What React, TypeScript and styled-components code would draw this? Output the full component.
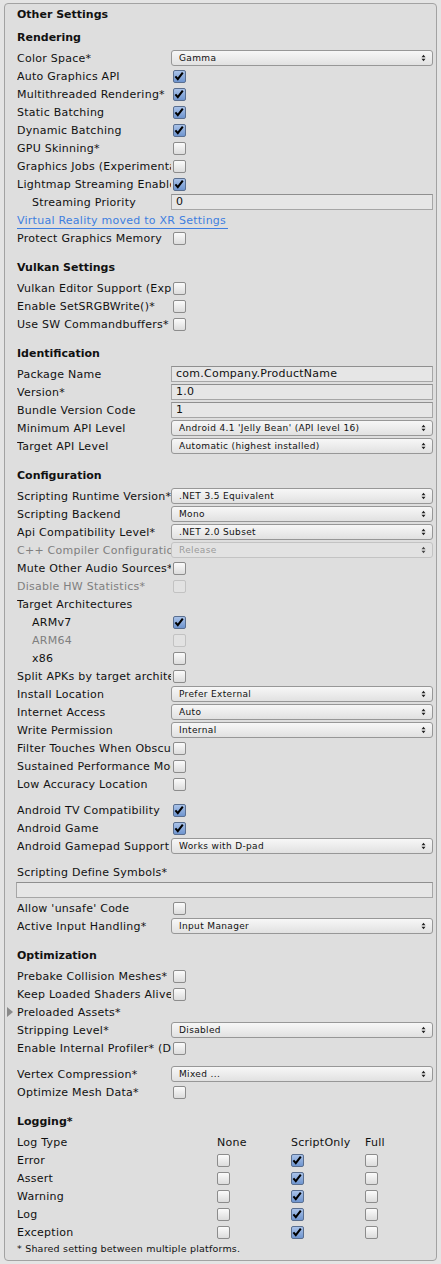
import { Fragment } from 'react';
import styled, { createGlobalStyle } from 'styled-components';

const GlobalStyle = createGlobalStyle`
  html, body {
    margin: 0;
    padding: 0;
    background: #e4e4e4;
  }
  body {
    font-family: 'DejaVu Sans', Verdana, sans-serif;
    font-size: 11px;
    color: #111;
  }
`;

type Item =
  | { kind: 'header'; text: string; top?: number }
  | { kind: 'toggle'; label: string; checked?: boolean; disabled?: boolean; indent?: boolean }
  | { kind: 'popup'; label: string; value: string; disabled?: boolean }
  | { kind: 'field'; label: string; value: string; indent?: boolean }
  | { kind: 'label'; label: string; foldout?: boolean }
  | { kind: 'link'; text: string }
  | { kind: 'wide'; value: string }
  | { kind: 'space'; h: number };

const items: Item[] = [
  { kind: 'header', text: 'Rendering', top: 5 },
  { kind: 'popup', label: 'Color Space*', value: 'Gamma' },
  { kind: 'toggle', label: 'Auto Graphics API', checked: true },
  { kind: 'toggle', label: 'Multithreaded Rendering*', checked: true },
  { kind: 'toggle', label: 'Static Batching', checked: true },
  { kind: 'toggle', label: 'Dynamic Batching', checked: true },
  { kind: 'toggle', label: 'GPU Skinning*' },
  { kind: 'toggle', label: 'Graphics Jobs (Experimental)*' },
  { kind: 'toggle', label: 'Lightmap Streaming Enabled', checked: true },
  { kind: 'field', label: 'Streaming Priority', value: '0', indent: true },
  { kind: 'link', text: 'Virtual Reality moved to XR Settings' },
  { kind: 'toggle', label: 'Protect Graphics Memory' },

  { kind: 'header', text: 'Vulkan Settings' },
  { kind: 'toggle', label: 'Vulkan Editor Support (Experimental)' },
  { kind: 'toggle', label: 'Enable SetSRGBWrite()*' },
  { kind: 'toggle', label: 'Use SW Commandbuffers*' },

  { kind: 'header', text: 'Identification' },
  { kind: 'field', label: 'Package Name', value: 'com.Company.ProductName' },
  { kind: 'field', label: 'Version*', value: '1.0' },
  { kind: 'field', label: 'Bundle Version Code', value: '1' },
  { kind: 'popup', label: 'Minimum API Level', value: "Android 4.1 'Jelly Bean' (API level 16)" },
  { kind: 'popup', label: 'Target API Level', value: 'Automatic (highest installed)' },

  { kind: 'header', text: 'Configuration' },
  { kind: 'popup', label: 'Scripting Runtime Version*', value: '.NET 3.5 Equivalent' },
  { kind: 'popup', label: 'Scripting Backend', value: 'Mono' },
  { kind: 'popup', label: 'Api Compatibility Level*', value: '.NET 2.0 Subset' },
  { kind: 'popup', label: 'C++ Compiler Configuration', value: 'Release', disabled: true },
  { kind: 'toggle', label: 'Mute Other Audio Sources*' },
  { kind: 'toggle', label: 'Disable HW Statistics*', disabled: true },
  { kind: 'label', label: 'Target Architectures' },
  { kind: 'toggle', label: 'ARMv7', checked: true, indent: true },
  { kind: 'toggle', label: 'ARM64', disabled: true, indent: true },
  { kind: 'toggle', label: 'x86', indent: true },
  { kind: 'toggle', label: 'Split APKs by target architecture' },
  { kind: 'popup', label: 'Install Location', value: 'Prefer External' },
  { kind: 'popup', label: 'Internet Access', value: 'Auto' },
  { kind: 'popup', label: 'Write Permission', value: 'Internal' },
  { kind: 'toggle', label: 'Filter Touches When Obscured' },
  { kind: 'toggle', label: 'Sustained Performance Mode' },
  { kind: 'toggle', label: 'Low Accuracy Location' },
  { kind: 'space', h: 8 },
  { kind: 'toggle', label: 'Android TV Compatibility', checked: true },
  { kind: 'toggle', label: 'Android Game', checked: true },
  { kind: 'popup', label: 'Android Gamepad Support Level', value: 'Works with D-pad' },
  { kind: 'space', h: 8 },
  { kind: 'label', label: 'Scripting Define Symbols*' },
  { kind: 'wide', value: '' },
  { kind: 'toggle', label: "Allow 'unsafe' Code" },
  { kind: 'popup', label: 'Active Input Handling*', value: 'Input Manager' },

  { kind: 'header', text: 'Optimization' },
  { kind: 'toggle', label: 'Prebake Collision Meshes*' },
  { kind: 'toggle', label: 'Keep Loaded Shaders Alive*' },
  { kind: 'label', label: 'Preloaded Assets*', foldout: true },
  { kind: 'popup', label: 'Stripping Level*', value: 'Disabled' },
  { kind: 'toggle', label: 'Enable Internal Profiler* (Deprecated)' },
  { kind: 'space', h: 8 },
  { kind: 'popup', label: 'Vertex Compression*', value: 'Mixed ...' },
  { kind: 'toggle', label: 'Optimize Mesh Data*' },

  { kind: 'header', text: 'Logging*' },
];

const logRows = ['Error', 'Assert', 'Warning', 'Log', 'Exception'];

export default function App() {
  return (
    <>
      <GlobalStyle />
      <Panel>
        <Title>Other Settings</Title>
        {items.map((it, i) => (
          <Fragment key={i}>{renderItem(it)}</Fragment>
        ))}
        <LogGrid>
          <LogHead>Log Type</LogHead>
          <LogHead>None</LogHead>
          <LogHead>ScriptOnly</LogHead>
          <LogHead>Full</LogHead>
          {logRows.map((name) => (
            <Fragment key={name}>
              <LogHead>{name}</LogHead>
              <LogCell><Toggle /></LogCell>
              <LogCell><Toggle checked /></LogCell>
              <LogCell><Toggle /></LogCell>
            </Fragment>
          ))}
        </LogGrid>
        <Note>* Shared setting between multiple platforms.</Note>
      </Panel>
    </>
  );
}

function renderItem(it: Item) {
  switch (it.kind) {
    case 'header':
      return <Header $top={it.top ?? 12}>{it.text}</Header>;
    case 'space':
      return <Space $h={it.h} />;
    case 'link':
      return (
        <Row>
          <Link>{it.text}</Link>
        </Row>
      );
    case 'wide':
      return (
        <Row>
          <Field $wide>{it.value}</Field>
        </Row>
      );
    case 'label':
      return (
        <Row>
          {it.foldout && <Foldout />}
          <Label $wide>{it.label}</Label>
        </Row>
      );
    case 'toggle':
      return (
        <Row>
          <Label $indent={it.indent} $disabled={it.disabled}>{it.label}</Label>
          <Toggle checked={it.checked} disabled={it.disabled} />
        </Row>
      );
    case 'popup':
      return (
        <Row>
          <Label $disabled={it.disabled}>{it.label}</Label>
          <Popup $disabled={it.disabled}>
            <span>{it.value}</span>
            <Arrows />
          </Popup>
        </Row>
      );
    case 'field':
      return (
        <Row>
          <Label $indent={it.indent}>{it.label}</Label>
          <Field>{it.value}</Field>
        </Row>
      );
  }
}

function Toggle({ checked, disabled }: { checked?: boolean; disabled?: boolean }) {
  return (
    <Box $checked={checked} $disabled={disabled}>
      {checked && (
        <svg width="13" height="13" viewBox="0 0 13 13">
          <path d="M2.6 6.4 L5.2 9.4 L10.6 2.2" fill="none" stroke="#000" strokeWidth="2.2" />
        </svg>
      )}
    </Box>
  );
}

function Arrows() {
  return (
    <ArrowIcon width="5" height="8" viewBox="0 0 5 8">
      <path d="M0.5 3.2 L2.5 0.8 L4.5 3.2 Z M0.5 4.8 L2.5 7.2 L4.5 4.8 Z" fill="#222" />
    </ArrowIcon>
  );
}

const Panel = styled.div`
  margin: 3px 4px 0 4px;
  width: 433px;
  height: 1258px;
  box-sizing: border-box;
  border: 1px solid #a2a2a2;
  border-radius: 4px;
  background: #dedede;
  padding: 2px 3px 0 12px;
`;

const Title = styled.div`
  height: 18px;
  line-height: 18px;
  font-weight: bold;
`;

const Header = styled.div<{ $top: number }>`
  margin-top: ${(p) => p.$top}px;
  margin-bottom: 2px;
  height: 18px;
  line-height: 18px;
  font-weight: bold;
`;

const Space = styled.div<{ $h: number }>`
  height: ${(p) => p.$h}px;
`;

const Row = styled.div`
  display: flex;
  align-items: center;
  height: 18px;
  position: relative;
`;

const Label = styled.div<{ $indent?: boolean; $disabled?: boolean; $wide?: boolean }>`
  flex: none;
  width: ${(p) => (p.$wide ? 'auto' : '154px')};
  box-sizing: border-box;
  padding-left: ${(p) => (p.$indent ? 15 : 0)}px;
  white-space: nowrap;
  overflow: hidden;
  color: ${(p) => (p.$disabled ? '#7f7f7f' : '#111')};
  letter-spacing: 0.25px;
`;

const Foldout = styled.span`
  position: absolute;
  left: -10px;
  top: 4px;
  width: 0;
  height: 0;
  border-top: 5px solid transparent;
  border-bottom: 5px solid transparent;
  border-left: 6px solid #8a8a8a;
`;

const Box = styled.span<{ $checked?: boolean; $disabled?: boolean }>`
  flex: none;
  display: inline-flex;
  margin-left: 2px;
  width: 13px;
  height: 13px;
  box-sizing: border-box;
  border: 1px solid ${(p) => (p.$disabled ? '#c2c2c2' : p.$checked ? '#5a6f90' : '#8c8c8c')};
  border-radius: 2px;
  background: ${(p) =>
    p.$disabled
      ? '#e2e2e2'
      : p.$checked
        ? 'linear-gradient(#a9c2e8, #6f95cf)'
        : 'linear-gradient(#fbfbfb, #dcdcdc)'};
  overflow: visible;
  svg {
    margin: -1px 0 0 -1px;
  }
`;

const Popup = styled.div<{ $disabled?: boolean }>`
  flex: 1;
  display: flex;
  align-items: center;
  justify-content: space-between;
  height: 16px;
  box-sizing: border-box;
  padding: 0 6px 0 7px;
  border: 1px solid ${(p) => (p.$disabled ? '#bdbdbd' : '#979797')};
  border-radius: 3px;
  background: ${(p) => (p.$disabled ? '#e4e4e4' : 'linear-gradient(#f7f7f7, #e1e1e1)')};
  font-size: 9px;
  letter-spacing: 0.35px;
  color: ${(p) => (p.$disabled ? '#8a8a8a' : '#111')};
  opacity: ${(p) => (p.$disabled ? 0.8 : 1)};
  span {
    white-space: nowrap;
    overflow: hidden;
  }
`;

const ArrowIcon = styled.svg`
  flex: none;
`;

const Field = styled.div<{ $wide?: boolean }>`
  flex: 1;
  height: 16px;
  line-height: 14px;
  box-sizing: border-box;
  margin-left: ${(p) => (p.$wide ? '-1px' : '0')};
  padding-left: 4px;
  border: 1px solid #a6a6a6;
  border-top-color: #8f8f8f;
  background: #e6e6e6;
  letter-spacing: 0.25px;
  white-space: nowrap;
`;

const Link = styled.span`
  color: #3f7ee0;
  border-bottom: 1px solid #3f7ee0;
  padding-right: 2px;
  line-height: 15px;
  margin-top: 2px;
  letter-spacing: 0.25px;
`;

const LogGrid = styled.div`
  display: grid;
  grid-template-columns: 200px 74px 74px 1fr;
  grid-auto-rows: 18px;
  align-items: center;
`;

const LogHead = styled.div`
  letter-spacing: 0.25px;
  white-space: nowrap;
`;

const LogCell = styled.div`
  display: flex;
  align-items: center;
  margin-left: -2px;
`;

const Note = styled.div`
  height: 18px;
  line-height: 16px;
  font-size: 9.5px;
  letter-spacing: 0.2px;
`;
